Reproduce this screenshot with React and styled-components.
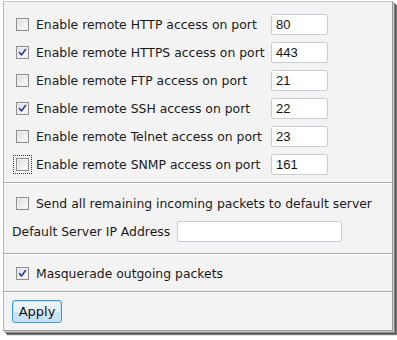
import React from "react";
import styled, { createGlobalStyle } from "styled-components";

const Global = createGlobalStyle`
  html, body { margin: 0; padding: 0; background: #ffffff; }
  body { width: 397px; height: 340px; overflow: hidden; }
`;

const Frame = styled.div`
  margin: 1px 0 0 3px;
  width: 390px;
  height: 330px;
  box-sizing: border-box;
  background: #f3f3f3;
  border-left: 1px solid #b5b5b5;
  border-top: 1px solid #c8c8c8;
  border-right: 1px solid #9a9a9a;
  border-bottom: 1px solid #9a9a9a;
  box-shadow: 1px 1px 0 #c9c9c9, 2px 2px 0 #8a8a8a, 3px 3px 0 #555, 4px 4px 1px #777;
  font-family: "DejaVu Sans", Verdana, sans-serif;
  font-size: 12.4px;
  color: #1a1a1a;
  display: flex;
  flex-direction: column;
`;

const Section = styled.div`
  box-sizing: border-box;
  padding: ${(p) => p.$pad};
  border-top: ${(p) => (p.$first ? "none" : "1px solid #a9a9a9")};
  box-shadow: ${(p) => (p.$first ? "none" : "inset 0 1px 0 #ffffff")};
`;

const PortGrid = styled.div`
  display: grid;
  grid-template-columns: 13px 228px 57px;
  column-gap: 7px;
  grid-auto-rows: 28px;
  align-items: center;
  padding-left: 12px;
`;

const Row = styled.div`
  display: flex;
  align-items: center;
  gap: ${(p) => p.$gap ?? 7}px;
  height: ${(p) => p.$h || 28}px;
  padding-left: ${(p) => p.$indent ?? 12}px;
`;

const Label = styled.span`
  white-space: nowrap;
  padding-top: 1px;
`;

const Box = styled.span`
  position: relative;
  display: inline-block;
  width: 13px;
  height: 13px;
  box-sizing: border-box;
  border: 1px solid #8f8f8f;
  background: linear-gradient(135deg, #dcdcdc 0%, #f4f4f4 70%, #ffffff 100%);
  box-shadow: inset 0 0 0 1px #f0f0f0;
  outline: ${(p) => (p.$focus ? "1px dotted #333" : "none")};
  outline-offset: 2px;
`;

const Check = () => (
  <svg width="11" height="11" viewBox="0 0 11 11" style={{ position: "absolute", left: 0, top: 0 }}>
    <path d="M2.5 5.5 L4.5 8 L8.5 2.5" fill="none" stroke="#2b3f9e" strokeWidth="1.6" strokeLinecap="round" strokeLinejoin="round" />
  </svg>
);

const CheckBox = ({ checked, focus }) => (
  <Box $focus={focus}>{checked && <Check />}</Box>
);

const Field = styled.div`
  box-sizing: border-box;
  width: ${(p) => p.$w}px;
  height: 21px;
  background: #ffffff;
  border: 1px solid #c9ced6;
  border-radius: 2px;
  padding: 2px 4px;
  font-family: "Liberation Sans", Arial, sans-serif;
  font-size: 13px;
  line-height: 15px;
  color: #111;
`;

const Button = styled.button`
  box-sizing: border-box;
  width: 50px;
  height: 23px;
  margin-left: 8px;
  padding: 0;
  border: 1px solid #3c9bd8;
  border-radius: 3px;
  background: linear-gradient(#eef6fc 0%, #e3eff8 50%, #cfe5f5 51%, #c4def2 100%);
  box-shadow: inset 0 0 0 1px #bfe3fb;
  font-family: "DejaVu Sans", Verdana, sans-serif;
  font-size: 13px;
  color: #111;
`;

const ports = [
  { label: "Enable remote HTTP access on port", port: "80", checked: false },
  { label: "Enable remote HTTPS access on port", port: "443", checked: true },
  { label: "Enable remote FTP access on port", port: "21", checked: false },
  { label: "Enable remote SSH access on port", port: "22", checked: true },
  { label: "Enable remote Telnet access on port", port: "23", checked: false },
  { label: "Enable remote SNMP access on port", port: "161", checked: false, focus: true },
];

export default function App() {
  return (
    <>
      <Global />
      <Frame>
        <Section $first $pad="8px 0 4px 0">
          <PortGrid>
            {ports.map((p) => (
              <React.Fragment key={p.label}>
                <CheckBox checked={p.checked} focus={p.focus} />
                <Label>{p.label}</Label>
                <Field $w={57}>{p.port}</Field>
              </React.Fragment>
            ))}
          </PortGrid>
        </Section>
        <Section $pad="6px 0 8px 0">
          <Row $h={28}>
            <CheckBox />
            <Label>Send all remaining incoming packets to default server</Label>
          </Row>
          <Row $h={28} $indent={8} $gap={7}>
            <Label>Default Server IP Address</Label>
            <Field $w={165} />
          </Row>
        </Section>
        <Section $pad="5px 0 4px 0">
          <Row $h={28}>
            <CheckBox checked />
            <Label>Masquerade outgoing packets</Label>
          </Row>
        </Section>
        <Section $pad="8px 0 0 0">
          <Button>Apply</Button>
        </Section>
      </Frame>
    </>
  );
}
